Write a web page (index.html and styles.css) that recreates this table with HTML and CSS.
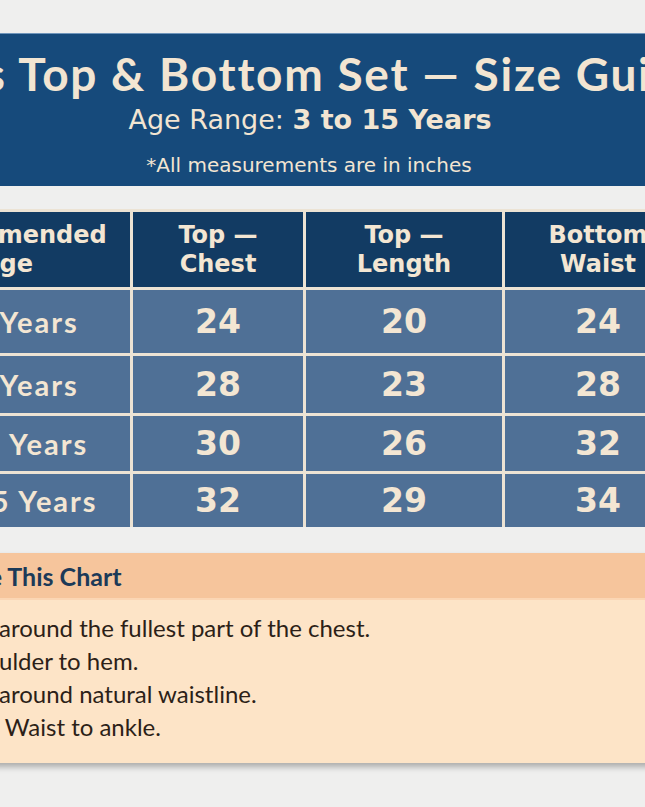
FILE: index.html
```html
<!DOCTYPE html>
<html lang="en">
<head>
<meta charset="utf-8">
<title>Size Guide</title>
<link rel="stylesheet" href="styles.css">
</head>
<body>
<div class="page">
  <header class="banner">
    <div class="banner-inner">
      <h1 class="title">Kids Top &amp; Bottom Set — Size Guide</h1>
      <p class="subtitle">Age Range: <strong>3 to 15 Years</strong></p>
      <p class="note">*All measurements are in inches</p>
    </div>
  </header>

  <div class="chart">
    <div class="cell head first">Recommended<br>Age</div>
    <div class="cell head">Top —<br>Chest</div>
    <div class="cell head">Top —<br>Length</div>
    <div class="cell head">Bottom<br>Waist</div>

    <div class="cell first">3–5 Years</div>
    <div class="cell num">24</div>
    <div class="cell num">20</div>
    <div class="cell num">24</div>

    <div class="cell first">6–8 Years</div>
    <div class="cell num">28</div>
    <div class="cell num">23</div>
    <div class="cell num">28</div>

    <div class="cell first">9–11 Years</div>
    <div class="cell num">30</div>
    <div class="cell num">26</div>
    <div class="cell num">32</div>

    <div class="cell first">12–15 Years</div>
    <div class="cell num">32</div>
    <div class="cell num">29</div>
    <div class="cell num">34</div>
  </div>

  <section class="howto">
    <h2 class="howto-head"><span class="pre">How to Use</span><span class="rest">&nbsp;This Chart</span></h2>
    <ul class="howto-list">
      <li><span class="pre"><b>Top Chest:</b> Measure&nbsp;</span><span class="rest">around the fullest part of the chest.</span></li>
      <li><span class="pre"><b>Top Length:</b> From sho</span><span class="rest">ulder to hem.</span></li>
      <li><span class="pre"><b>Bottom Waist:</b> Measure&nbsp;</span><span class="rest">around natural waistline.</span></li>
      <li><span class="pre"><b>Bottom Length:</b></span><span class="rest">&nbsp;Waist to ankle.</span></li>
    </ul>
  </section>
</div>
</body>
</html>
```
FILE: styles.css
```css
* { box-sizing: border-box; }
html, body {
  margin: 0;
  padding: 0;
  width: 645px;
  height: 807px;
  overflow: hidden;
  background: #efefee;
  font-family: Lato, "Open Sans", sans-serif;
}
.page {
  width: 645px;
  height: 807px;
  overflow: hidden;
  padding-top: 33px;
}

/* banner */
.banner {
  height: 153px;
  background: #164a7b;
  border-top: 1px solid #6f95bb;
  color: #f2e5d2;
}
.banner-inner {
  width: 1000px;
  margin-left: -194px;
  padding-top: 15px;
  text-align: center;
}
.title {
  margin: 0 0 0 4px;
  font-size: 46px;
  line-height: 50px;
  font-weight: 700;
  letter-spacing: 1.75px;
  white-space: nowrap;
}
.subtitle {
  margin: 6px 0 0 8px;
  font-family: "DejaVu Sans", sans-serif;
  font-size: 27px;
  line-height: 30px;
  font-weight: 400;
}
.subtitle strong { font-weight: 700; }
.note {
  margin: 18px 0 0 6px;
  font-family: "DejaVu Sans", sans-serif;
  font-size: 20px;
  line-height: 24px;
}

/* table */
.chart {
  margin-top: 23px;
  margin-left: -116px;
  width: 830px;
  display: grid;
  grid-template-columns: 246px 170px 196px 186px;
  grid-template-rows: 75px 63px 57px 55px 53px;
  gap: 3px;
  padding-top: 3px;
  background: #ece3d4;
}
.cell {
  display: flex;
  align-items: center;
  justify-content: center;
  text-align: center;
  background: #4f7096;
  color: #f3e6d3;
  font-weight: 700;
  font-size: 29px;
  white-space: nowrap;
}
.cell.first { letter-spacing: 2px; }
.cell.head {
  background: #123b63;
  font-family: "DejaVu Sans", sans-serif;
  font-size: 24px;
  line-height: 29px;
  letter-spacing: 0;
}
.cell.num {
  font-family: "DejaVu Sans", sans-serif;
  font-size: 33px;
}

/* how to */
.howto {
  margin-top: 26px;
  margin-left: -20px;
  width: 700px;
  background: #fde4c7;
  box-shadow: 0 4px 6px rgba(0, 0, 0, 0.28);
}
.howto-head {
  margin: 0;
  height: 47px;
  background: #f6c59c;
  border-bottom: 2px solid #fbd6b4;
  display: grid;
  grid-template-columns: 300px auto;
  align-items: center;
  margin-left: -278px;
  font-size: 25px;
  font-weight: 700;
  color: #1c3a58;
  white-space: nowrap;
}
.pre { text-align: right; white-space: nowrap; }
.rest { white-space: nowrap; }
.howto-list {
  list-style: none;
  margin: 0;
  padding: 11px 0 0;
  height: 163px;
  color: #2c1f18;
  font-size: 24px;
  line-height: 33px;
}
.howto-list li {
  display: grid;
  grid-template-columns: 300px auto;
  margin-left: -281px;
}
```
